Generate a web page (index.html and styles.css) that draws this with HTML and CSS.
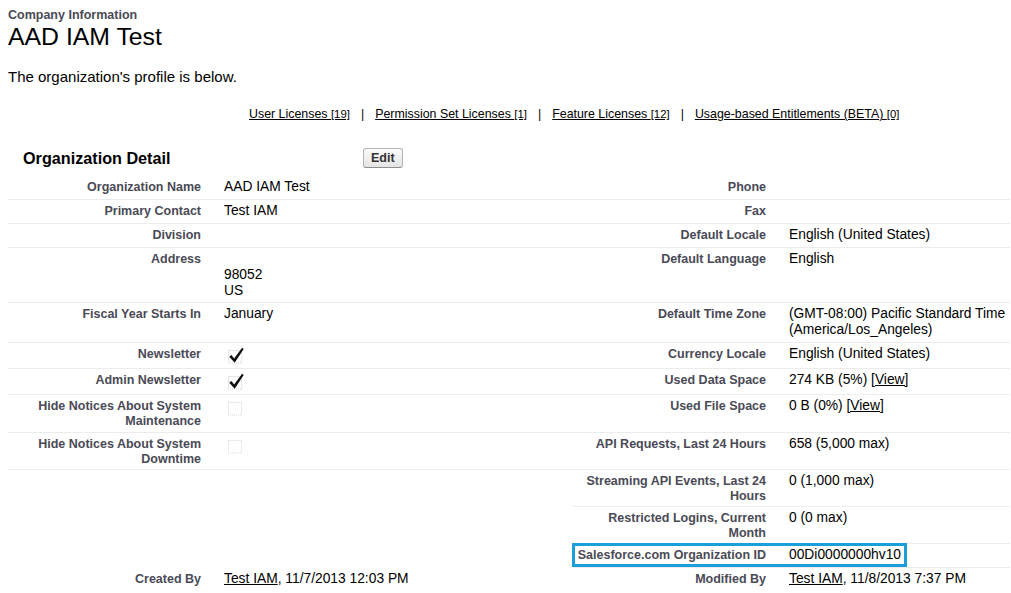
FILE: index.html
```html
<!DOCTYPE html>
<html lang="en">
<head>
<meta charset="utf-8">
<title>Company Information</title>
<link rel="stylesheet" href="styles.css">
</head>
<body>
<div class="page">
  <header class="page-head">
    <h2 class="crumb">Company Information</h2>
    <h1 class="title">AAD IAM Test</h1>
  </header>
  <p class="intro">The organization's profile is below.</p>
  <nav class="related">
    <a href="#">User Licenses <span class="count">[19]</span></a><span class="sep">|</span>
    <a href="#">Permission Set Licenses <span class="count">[1]</span></a><span class="sep">|</span>
    <a href="#">Feature Licenses <span class="count">[12]</span></a><span class="sep">|</span>
    <a href="#">Usage-based Entitlements (BETA) <span class="count">[0]</span></a>
  </nav>

  <section class="block">
    <div class="block-head">
      <h3 class="block-title">Organization Detail</h3>
      <button class="btn" type="button">Edit</button>
    </div>
    <table class="detail">
      <colgroup>
        <col class="c-lbl"><col class="c-val-l"><col class="c-lbl"><col class="c-val-r">
      </colgroup>
      <tbody>
        <tr>
          <td class="lbl">Organization Name</td><td class="val">AAD IAM Test</td>
          <td class="lbl">Phone</td><td class="val"></td>
        </tr>
        <tr>
          <td class="lbl">Primary Contact</td><td class="val">Test IAM</td>
          <td class="lbl">Fax</td><td class="val"></td>
        </tr>
        <tr>
          <td class="lbl">Division</td><td class="val"></td>
          <td class="lbl">Default Locale</td><td class="val">English (United States)</td>
        </tr>
        <tr>
          <td class="lbl">Address</td><td class="val val-tight"><br>98052<br>US</td>
          <td class="lbl">Default Language</td><td class="val">English</td>
        </tr>
        <tr>
          <td class="lbl">Fiscal Year Starts In</td><td class="val">January</td>
          <td class="lbl">Default Time Zone</td><td class="val">(GMT-08:00) Pacific Standard Time (America/Los_Angeles)</td>
        </tr>
        <tr>
          <td class="lbl">Newsletter</td>
          <td class="val"><svg class="cb" viewBox="0 0 21 18" width="21" height="18" aria-label="Checked"><rect x="4.5" y="4.5" width="13" height="12.5" fill="none" stroke="#d0d0d0" stroke-dasharray="1 1"/><path d="M5.2 10.7 L7.5 9.1 L10.1 12.4 L18.1 1.8 L19.7 2.9 L10.7 16.7 Z" fill="#111"/></svg></td>
          <td class="lbl">Currency Locale</td><td class="val">English (United States)</td>
        </tr>
        <tr>
          <td class="lbl">Admin Newsletter</td>
          <td class="val"><svg class="cb" viewBox="0 0 21 18" width="21" height="18" aria-label="Checked"><rect x="4.5" y="4.5" width="13" height="12.5" fill="none" stroke="#d0d0d0" stroke-dasharray="1 1"/><path d="M5.2 10.7 L7.5 9.1 L10.1 12.4 L18.1 1.8 L19.7 2.9 L10.7 16.7 Z" fill="#111"/></svg></td>
          <td class="lbl">Used Data Space</td><td class="val">274 KB (5%) <a href="#">[View]</a></td>
        </tr>
        <tr>
          <td class="lbl lbl-tall">Hide Notices About System Maintenance</td>
          <td class="val"><svg class="cb" viewBox="0 0 21 18" width="21" height="18" aria-label="Not Checked"><rect x="4.5" y="4.5" width="13" height="12.5" fill="none" stroke="#d6d6d6" stroke-dasharray="1 1"/></svg></td>
          <td class="lbl">Used File Space</td><td class="val">0 B (0%) <a href="#">[View]</a></td>
        </tr>
        <tr>
          <td class="lbl">Hide Notices About System Downtime</td>
          <td class="val"><svg class="cb" viewBox="0 0 21 18" width="21" height="18" aria-label="Not Checked"><rect x="4.5" y="4.5" width="13" height="12.5" fill="none" stroke="#d6d6d6" stroke-dasharray="1 1"/></svg></td>
          <td class="lbl">API Requests, Last 24 Hours</td><td class="val">658 (5,000 max)</td>
        </tr>
        <tr>
          <td class="lbl blank"></td><td class="val blank"></td>
          <td class="lbl">Streaming API Events, Last 24 Hours</td><td class="val">0 (1,000 max)</td>
        </tr>
        <tr>
          <td class="lbl blank"></td><td class="val blank"></td>
          <td class="lbl">Restricted Logins, Current Month</td><td class="val">0 (0 max)</td>
        </tr>
        <tr>
          <td class="lbl blank"></td><td class="val blank"></td>
          <td class="lbl hl-cell"><span class="highlight"></span>Salesforce.com Organization ID</td><td class="val">00Di0000000hv10</td>
        </tr>
        <tr class="last">
          <td class="lbl">Created By</td><td class="val"><a href="#">Test IAM</a>, 11/7/2013 12:03 PM</td>
          <td class="lbl">Modified By</td><td class="val"><a href="#">Test IAM</a>, 11/8/2013 7:37 PM</td>
        </tr>
      </tbody>
    </table>
  </section>
</div>
</body>
</html>
```

FILE: styles.css
```css
* {
  box-sizing: border-box;
}

body {
  margin: 0;
  background: #fff;
  color: #000;
  font-family: "Liberation Sans", Arial, sans-serif;
}

.page {
  padding: 8px 1px 0 8px;
}

.crumb {
  margin: 0;
  font-size: 12.5px;
  line-height: 15px;
  font-weight: bold;
  color: #4a4a56;
}

.title {
  margin: 0;
  font-size: 24.8px;
  line-height: 28px;
  font-weight: normal;
}

.intro {
  margin: 17px 0 0;
  font-size: 15px;
  line-height: 18px;
}

.related {
  display: flex;
  margin: 20px 0 0 241px;
  font-size: 12.4px;
  line-height: 16px;
}

.related a {
  color: #000;
  text-decoration: underline;
}

.count {
  font-size: 11.4px;
}

.sep {
  margin: 0 11px;
  color: #000;
}

.block {
  margin-top: 18px;
}

.block-head {
  display: flex;
  align-items: center;
  height: 36px;
  padding-left: 15px;
}

.block-title {
  margin: 0;
  width: 340px;
  font-size: 16.2px;
  line-height: 20px;
  font-weight: bold;
  color: #000;
}

.btn {
  height: 20px;
  padding: 0 7px;
  font-family: "Liberation Sans", Arial, sans-serif;
  font-size: 12.5px;
  font-weight: bold;
  color: #333;
  background: linear-gradient(#fbfbfb, #e4e4e4);
  border: 1px solid #b5b5b5;
  border-bottom-color: #8f8f8f;
  border-radius: 3px;
}

.detail {
  width: 1002px;
  table-layout: fixed;
  border-collapse: separate;
  border-spacing: 0;
}

.c-lbl {
  width: 203px;
}

.c-val-l {
  width: 362px;
}

.c-val-r {
  width: 234px;
}

.detail td {
  vertical-align: top;
  border-bottom: 1px solid #ececec;
}

.detail td.blank,
.detail tr.last td {
  border-bottom: none;
}

.lbl {
  padding: 4px 10px 3px 2px;
  text-align: right;
  font-size: 12.5px;
  line-height: 14.5px;
  font-weight: bold;
  color: #4a4a56;
}

.lbl-tall {
  padding-bottom: 4px;
}

.val {
  padding: 3px 0 4px 13px;
  font-size: 13.8px;
  line-height: 16px;
  color: #000;
}

.val-tight {
  padding-bottom: 3px;
}

.val a {
  color: #000;
  text-decoration: underline;
}

.cb {
  display: block;
}

.hl-cell {
  position: relative;
}

.highlight {
  position: absolute;
  left: -1px;
  top: -1px;
  width: 335px;
  height: 24px;
  border: 3px solid #1a9fd9;
  pointer-events: none;
}
```
